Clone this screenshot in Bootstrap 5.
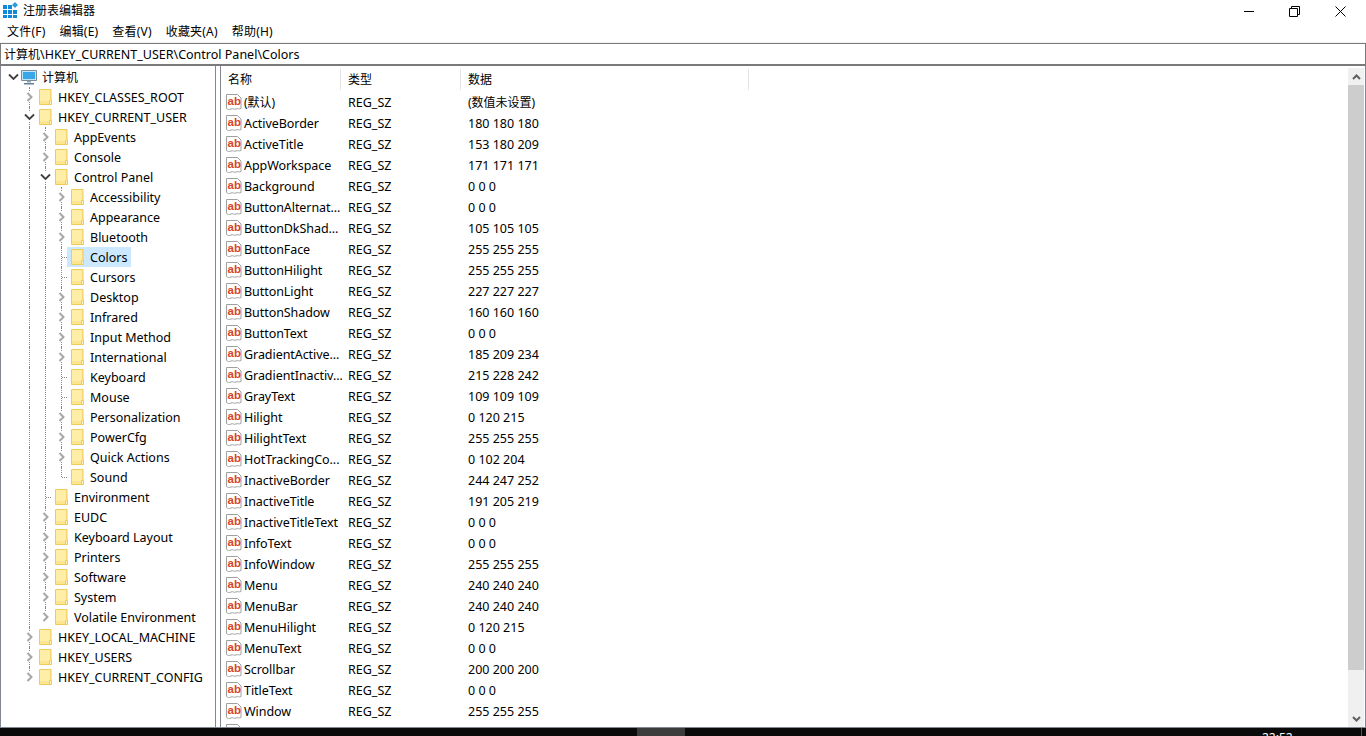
<!DOCTYPE html>
<html lang="zh-CN">
<head>
    <meta charset="UTF-8">
    <meta name="viewport" content="width=device-width, initial-scale=1.0">
    <title>注册表编辑器</title>
    <link href="https://cdn.jsdelivr.net/npm/bootstrap@5.3.0/dist/css/bootstrap.min.css" rel="stylesheet">
    <style>
        html, body { height: 100%; overflow: hidden; }
        body { font: 12.5px/20px "Noto Sans", "Noto Sans CJK SC", sans-serif; color: #000; background: #fff; }
        .win { height: 736px; }
        .title-bar { height: 22px; padding-left: 2px; padding-right: 3px; font-size: 12px; }
        .win-btn { width: 46px; height: 20px; }
        .menu-bar { height: 20px; padding-left: 7px; gap: 14px; font-size: 12px; letter-spacing: .2px; }
        .addr-gap { height: 1px; background: #f0f0f0; }
        .addr-bar { height: 23px; border: 1px solid #7a7a7a; border-bottom-width: 2px; padding: 1px 0 0 3px; line-height: 20px; }
        .cjk-text { font-size: 12px; }
        .panes { flex: 1 1 0; min-height: 0; border-bottom: 1px solid #828790; }
        .tree-pane { width: 216px; flex: none; border-left: 1px solid #828790; border-right: 1px solid #828790; overflow: hidden; padding-top: 1px; }
        .split { width: 4px; flex: none; }
        .list-pane { flex: 1 1 0; min-width: 0; border-left: 1px solid #828790; border-right: 1px solid #828790; overflow: hidden; padding-top: 2px; }
        .tree-row { height: 20px; padding-left: 2px; white-space: nowrap; }
        .tree-cell { width: 16px; height: 20px; flex: none; position: relative; }
        .guide::before { content: ""; position: absolute; left: 10px; top: 0; bottom: 0; border-left: 1px dotted #8a8a8a; }
        .guide-half::before { bottom: 10px; }
        .tick::after { content: ""; position: absolute; left: 11px; top: 10px; width: 5px; border-top: 1px dotted #8a8a8a; }
        .tree-cell svg { position: absolute; left: 5px; top: 5px; background: #fff; }
        .tree-item { height: 20px; padding: 0 4px 0 4px; gap: 6px; }
        .tree-item span, .row-name span, .row-type { padding-top: 2px; }
        .tree-item.picked { background: #cce8ff; }
        .root-item { padding-left: 2px; gap: 5px; }
        .list-head { height: 23px; padding-top: 1px; font-size: 12px; }
        .head-cell { height: 21px; padding: 1px 0 0 7px; border-right: 1px solid #e5e5e5; flex: none; }
        .col-name { width: 120px; }
        .col-type { width: 120px; }
        .col-data { width: 288px; }
        .list-row { height: 21px; white-space: nowrap; }
        .row-name { width: 121px; flex: none; padding-left: 5px; gap: 2px; overflow: hidden; }
        .row-name span { letter-spacing: -.06px; }
        .row-type { width: 120px; flex: none; padding-left: 6px; }
        .scroll-track { width: 16px; flex: none; background: #f0f0f0; margin-right: 1px; }
        .scroll-btn { height: 17px; }
        .scroll-thumb { height: 585px; background: #cdcdcd; }
        .task-bar { height: 8px; background: #0a0a0a; color: #fff; overflow: hidden; }
        .task-active { width: 48px; margin-left: 637px; background: #3c3c3c; }
        .task-clock { width: 99px; margin-left: 577px; line-height: 14px; font-size: 12px; padding-top: 3px; }
        .task-edge { width: 1px; background: #555; }
    </style>
</head>
<body>
    <div class="win d-flex flex-column">
        <div class="title-bar d-flex align-items-center">
            <svg width="17" height="18" viewBox="0 0 17 18" class="me-1 mb-1 flex-shrink-0">
                <path d="M1 5h4v4H1zM6 5h4v4H6zM1 10h4v4H1zM6 10h4v4H6zM11 10h4v4h-4zM1 15h4v3H1zM6 15h4v3H6zM11 15h4v3h-4z" fill="#1289d8"/>
                <path d="M13 2l3 3-3 3-3-3z" fill="#2f9bd8"/>
            </svg>
            <span class="flex-grow-1">注册表编辑器</span>
            <div class="win-btn d-flex align-items-center justify-content-center">
                <svg width="11" height="11"><path d="M1 5.500h10" stroke="#000"/></svg>
            </div>
            <div class="win-btn d-flex align-items-center justify-content-center">
                <svg width="11" height="11"><path d="M.5 2.500h8v8h-8zM2.500 2.500v-2h8v8h-2" fill="none" stroke="#000"/></svg>
            </div>
            <div class="win-btn d-flex align-items-center justify-content-center">
                <svg width="11" height="11"><path d="M.5.5l10 10M10.500.5l-10 10" stroke="#000"/></svg>
            </div>
        </div>
        <div class="menu-bar d-flex align-items-center">
            <span>文件(F)</span><span>编辑(E)</span><span>查看(V)</span><span>收藏夹(A)</span><span>帮助(H)</span>
        </div>
        <div class="addr-gap"></div>
        <div class="addr-bar"><span class="cjk-text">计算机</span>\HKEY_CURRENT_USER\Control Panel\Colors</div>
        <div class="panes d-flex">
            <div class="tree-pane" id="tree"></div>
            <div class="split"></div>
            <div class="list-pane d-flex">
                <div class="flex-grow-1 overflow-hidden">
                    <div class="list-head d-flex">
                        <div class="head-cell col-name">名称</div>
                        <div class="head-cell col-type">类型</div>
                        <div class="head-cell col-data">数据</div>
                    </div>
                    <div id="rows"></div>
                </div>
                <div class="scroll-track d-flex flex-column">
                    <div class="scroll-btn d-flex align-items-center justify-content-center">
                        <svg width="9" height="6"><path d="M1 5l3.500-3.500L8 5" fill="none" stroke="#606060" stroke-width="2"/></svg>
                    </div>
                    <div class="scroll-thumb"></div>
                    <div class="flex-grow-1"></div>
                    <div class="scroll-btn d-flex align-items-center justify-content-center">
                        <svg width="9" height="6"><path d="M1 1l3.500 3.500L8 1" fill="none" stroke="#606060" stroke-width="2"/></svg>
                    </div>
                </div>
            </div>
        </div>
        <div class="task-bar d-flex">
            <div class="task-active"></div>
            <div class="task-clock">22:52</div>
            <div class="task-edge"></div>
        </div>
    </div>

    <script>
        const treeRows = [
            [0, '计算机', 'o'], [1, 'HKEY_CLASSES_ROOT', 'c'], [1, 'HKEY_CURRENT_USER', 'o'],
            [2, 'AppEvents', 'c'], [2, 'Console', 'c'], [2, 'Control Panel', 'o'],
            [3, 'Accessibility', 'c'], [3, 'Appearance', 'c'], [3, 'Bluetooth', 'c'], [3, 'Colors', 'l'],
            [3, 'Cursors', 'l'], [3, 'Desktop', 'c'], [3, 'Infrared', 'c'], [3, 'Input Method', 'c'],
            [3, 'International', 'c'], [3, 'Keyboard', 'l'], [3, 'Mouse', 'l'], [3, 'Personalization', 'c'],
            [3, 'PowerCfg', 'c'], [3, 'Quick Actions', 'c'], [3, 'Sound', 'l'],
            [2, 'Environment', 'l'], [2, 'EUDC', 'c'], [2, 'Keyboard Layout', 'c'], [2, 'Printers', 'c'],
            [2, 'Software', 'c'], [2, 'System', 'c'], [2, 'Volatile Environment', 'c'],
            [1, 'HKEY_LOCAL_MACHINE', 'c'], [1, 'HKEY_USERS', 'c'], [1, 'HKEY_CURRENT_CONFIG', 'c']
        ];

        const values = [
            ['(默认)', '(数值未设置)'], ['ActiveBorder', '180 180 180'], ['ActiveTitle', '153 180 209'],
            ['AppWorkspace', '171 171 171'], ['Background', '0 0 0'], ['ButtonAlternat...', '0 0 0'],
            ['ButtonDkShad...', '105 105 105'], ['ButtonFace', '255 255 255'], ['ButtonHilight', '255 255 255'],
            ['ButtonLight', '227 227 227'], ['ButtonShadow', '160 160 160'], ['ButtonText', '0 0 0'],
            ['GradientActive...', '185 209 234'], ['GradientInactiv...', '215 228 242'], ['GrayText', '109 109 109'],
            ['Hilight', '0 120 215'], ['HilightText', '255 255 255'], ['HotTrackingCo...', '0 102 204'],
            ['InactiveBorder', '244 247 252'], ['InactiveTitle', '191 205 219'], ['InactiveTitleText', '0 0 0'],
            ['InfoText', '0 0 0'], ['InfoWindow', '255 255 255'], ['Menu', '240 240 240'],
            ['MenuBar', '240 240 240'], ['MenuHilight', '0 120 215'], ['MenuText', '0 0 0'],
            ['Scrollbar', '200 200 200'], ['TitleText', '0 0 0'], ['Window', '255 255 255'], ['', '']
        ];

        const chevronOpen = '<svg width="11" height="10"><path d="M1 2.500l4.500 4.500L10 2.500" fill="none" stroke="#404040" stroke-width="1.800"/></svg>';
        const chevronShut = '<svg width="11" height="10"><path d="M3.500 1l4 4-4 4" fill="none" stroke="#a6a6a6" stroke-width="2"/></svg>';
        const folder = '<svg width="13" height="16" class="flex-shrink-0"><path d="M.5.5h11.500v15H.5z" fill="#fde48e" stroke="#eecb5a"/><path d="M1 1h10v11H1z" fill="#ffeea8"/><path d="M10.500 15.500v-4h2v4z" fill="#fff3c4" stroke="#eecb5a"/></svg>';
        const computer = '<svg width="16" height="16" class="flex-shrink-0"><path d="M.5 1.500h15v10H.5z" fill="#bfe6fb" stroke="#7c8c99"/><path d="M2 3h12v7H2z" fill="#3aa6ea"/><path d="M6 12h4v1.500H6z" fill="#8ea2b0"/><path d="M3 14h10v1.500H3z" fill="#5f7f98"/></svg>';
        const paper = '<path d="M.5 .5h11l3.500 3.500v10.500c-2 1-3-.5-5 .5s-3-1-5 0-3 .5-4.500-.5z" fill="#fff" stroke="#a0a0a0"/>';
        const abIcon = `<svg width="16" height="16" class="flex-shrink-0">${paper}<text x="1.500" y="11" font-family="Liberation Sans" font-weight="700" font-size="11.500" fill="#d8452a">ab</text></svg>`;
        const blankIcon = `<svg width="16" height="16" class="flex-shrink-0">${paper}</svg>`;

        function hasGuide(i, level) {
            for (let j = i + 1; j < treeRows.length; j++) {
                if (treeRows[j][0] <= level) return treeRows[j][0] === level;
            }
            return false;
        }

        document.getElementById('tree').innerHTML = treeRows.map((row, i) => {
            const [depth, label, state] = row;
            let cells = '';
            for (let l = 0; l < depth; l++) {
                cells += `<div class="tree-cell ${l > 0 && hasGuide(i, l) ? 'guide' : ''}"></div>`;
            }
            let own = '';
            if (state === 'l') {
                own = `<div class="tree-cell tick guide ${hasGuide(i, depth) ? '' : 'guide-half'}"></div>`;
            } else {
                const line = depth > 0 ? (hasGuide(i, depth) ? 'guide' : 'guide guide-half') : '';
                own = `<div class="tree-cell ${line}">${state === 'o' ? chevronOpen : chevronShut}</div>`;
            }
            const picked = label === 'Colors' ? 'picked' : '';
            const item = depth === 0
                ? `<div class="tree-item root-item d-flex align-items-center">${computer}<span class="cjk-text">${label}</span></div>`
                : `<div class="tree-item ${picked} d-flex align-items-center">${folder}<span>${label}</span></div>`;
            return `<div class="tree-row d-flex">${cells}${own}${item}</div>`;
        }).join('');

        document.getElementById('rows').innerHTML = values.map((v, i) => `
            <div class="list-row d-flex align-items-center">
                <div class="row-name d-flex align-items-center">${v[0] ? abIcon : blankIcon}<span class="${i === 0 ? 'cjk-text' : ''}">${v[0]}</span></div>
                <div class="row-type">${v[0] ? 'REG_SZ' : ''}</div>
                <div class="row-type ${i === 0 ? 'cjk-text' : ''}">${v[1]}</div>
            </div>`).join('');
    </script>

    <script src="https://cdn.jsdelivr.net/npm/bootstrap@5.3.0/dist/js/bootstrap.bundle.min.js"></script>
</body>
</html>
